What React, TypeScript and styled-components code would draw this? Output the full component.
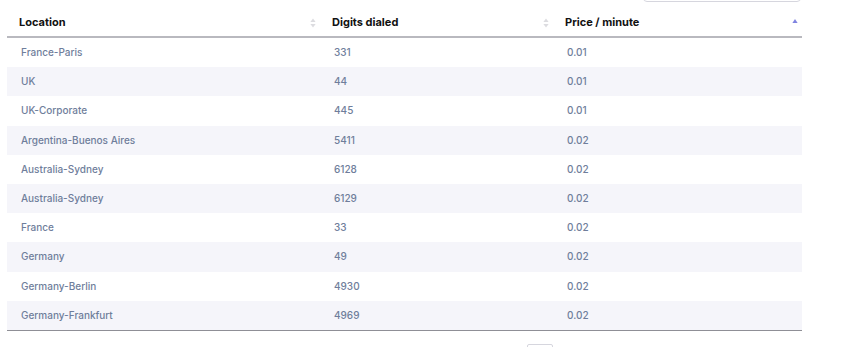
import React from 'react';
import styled, { createGlobalStyle } from 'styled-components';

const rates = [
  { location: 'France-Paris', digits: '331', price: '0.01' },
  { location: 'UK', digits: '44', price: '0.01' },
  { location: 'UK-Corporate', digits: '445', price: '0.01' },
  { location: 'Argentina-Buenos Aires', digits: '5411', price: '0.02' },
  { location: 'Australia-Sydney', digits: '6128', price: '0.02' },
  { location: 'Australia-Sydney', digits: '6129', price: '0.02' },
  { location: 'France', digits: '33', price: '0.02' },
  { location: 'Germany', digits: '49', price: '0.02' },
  { location: 'Germany-Berlin', digits: '4930', price: '0.02' },
  { location: 'Germany-Frankfurt', digits: '4969', price: '0.02' },
];

const columns = [
  { title: 'Location', width: 313, sort: 'none' },
  { title: 'Digits dialed', width: 233, sort: 'none' },
  { title: 'Price / minute', width: 249, sort: 'asc' },
];

const GlobalStyle = createGlobalStyle`
  body {
    margin: 0;
    background: #ffffff;
    font-family: Inter, "Liberation Sans", sans-serif;
    overflow: hidden;
  }
`;

function SortIcon({ sort }: { sort: string }) {
  if (sort === 'asc') {
    return (
      <SortSvg width="6" height="10" viewBox="0 0 6 10">
        <path d="M3 1 L5.6 5 L0.4 5 Z" fill="#7f83e0" />
      </SortSvg>
    );
  }
  return (
    <SortSvg width="6" height="10" viewBox="0 0 6 10">
      <path d="M3 0.5 L5.6 4 L0.4 4 Z" fill="#dcdce0" />
      <path d="M3 9.5 L5.6 6 L0.4 6 Z" fill="#dcdce0" />
    </SortSvg>
  );
}

export default function App() {
  return (
    <Page>
      <GlobalStyle />
      <Toolbar>
        <SearchInput type="search" aria-label="Search" />
      </Toolbar>
      <RateTable>
        <colgroup>
          {columns.map((c) => (
            <col key={c.title} style={{ width: c.width }} />
          ))}
        </colgroup>
        <thead>
          <tr>
            {columns.map((c) => (
              <HeadCell key={c.title}>
                {c.title}
                <SortIcon sort={c.sort} />
              </HeadCell>
            ))}
          </tr>
        </thead>
        <tbody>
          {rates.map((r, i) => (
            <Row key={r.digits} $striped={i % 2 === 1}>
              <Cell>{r.location}</Cell>
              <Cell>{r.digits}</Cell>
              <Cell>{r.price}</Cell>
            </Row>
          ))}
        </tbody>
      </RateTable>
      <Footer>
        <PageButton />
      </Footer>
    </Page>
  );
}

const Page = styled.div`
  display: flex;
  flex-direction: column;
  width: 850px;
  padding: 0 0 0 7px;
  box-sizing: border-box;
`;

const Toolbar = styled.div`
  display: flex;
  justify-content: flex-end;
  width: 795px;
  margin-top: -27px;
`;

const SearchInput = styled.input`
  width: 158px;
  height: 29px;
  box-sizing: border-box;
  border: 1px solid #d6d6de;
  border-radius: 4px;
  background: #ffffff;
  outline: none;
  margin-right: 1px;
`;

const RateTable = styled.table`
  width: 795px;
  border-collapse: collapse;
  table-layout: fixed;
  border-bottom: 1px solid #8f8f96;
`;

const HeadCell = styled.th`
  position: relative;
  text-align: left;
  padding: 13px 12px 6px;
  line-height: 15px;
  font-size: 11px;
  font-weight: 700;
  color: #111111;
  border-bottom: 2px solid #b9b9bf;
`;

const SortSvg = styled.svg`
  position: absolute;
  right: 4px;
  top: 16px;
`;

const Row = styled.tr<{ $striped: boolean }>`
  background: ${(p) => (p.$striped ? '#f5f5fa' : '#ffffff')};
`;

const Cell = styled.td`
  padding: 6px 12px 6px 14px;
  height: 17.2px;
  line-height: 17.2px;
  font-size: 10px;
  font-weight: 500;
  color: #6f7e9b;
  white-space: nowrap;
`;

const Footer = styled.div`
  display: flex;
  padding: 13px 0 0 520px;
`;

const PageButton = styled.button`
  width: 26px;
  height: 26px;
  border: 1px solid #d6d6de;
  border-radius: 2px;
  background: #ffffff;
  padding: 0;
`;
